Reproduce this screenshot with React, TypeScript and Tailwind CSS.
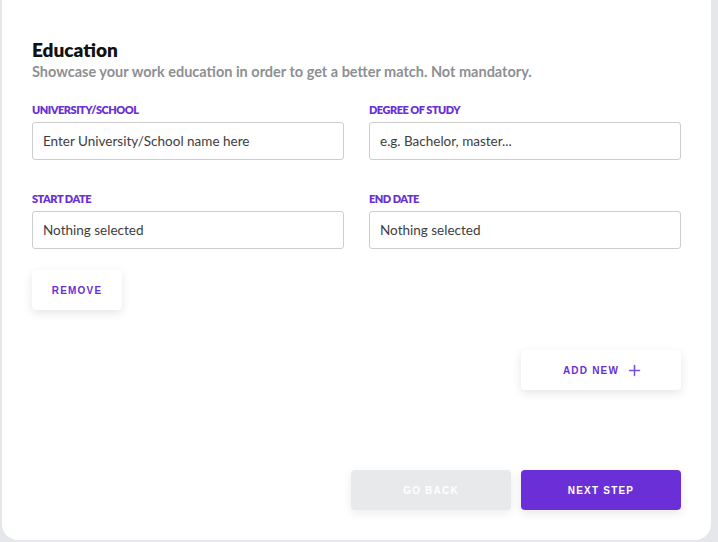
import { Plus } from 'lucide-react';

interface FieldProps {
    label: string;
    placeholder: string;
}

function Field({ label, placeholder }: FieldProps) {
    return (
        <div className="flex flex-col">
            <label className="text-[11px] leading-[16px] font-extrabold text-[#6a2fd6] uppercase tracking-[-0.5px] mb-[4px]">
                {label}
            </label>
            <div className="h-[38px] rounded-[3px] border border-[#cdcdcd] bg-white flex items-center px-[10px] text-[13.5px] text-[#3d3d3d]">
                {placeholder}
            </div>
        </div>
    );
}

export default function App() {
    return (
        <div
            className="w-[718px] h-[542px] bg-[#e6e7ea] overflow-hidden"
            style={{ fontFamily: 'Lato, "Open Sans", sans-serif' }}
        >
            <div className="ml-[2px] w-[709px] h-[540px] bg-white rounded-b-[16px] px-[30px] pt-[38px] flex flex-col">
                <h2 className="text-[19px] leading-[24px] font-extrabold text-[#111]">Education</h2>
                <p className="text-[14.5px] leading-[20px] font-bold text-[#8d8f93]">
                    Showcase your work education in order to get a better match. Not mandatory.
                </p>

                <div className="grid grid-cols-2 gap-x-[25px] mt-[20px]">
                    <Field label="University/School" placeholder="Enter University/School name here" />
                    <Field label="Degree of study" placeholder="e.g. Bachelor, master..." />
                </div>

                <div className="grid grid-cols-2 gap-x-[25px] mt-[31px]">
                    <Field label="Start date" placeholder="Nothing selected" />
                    <Field label="End date" placeholder="Nothing selected" />
                </div>

                <div className="mt-[21px]">
                    <button
                        className="w-[90px] h-[40px] rounded-[4px] bg-white shadow-[0_3px_10px_rgba(0,0,0,0.1)] text-[10px] font-bold tracking-[1.2px] text-[#6a2fd6]"
                        style={{ fontFamily: '"Liberation Sans", Arial, sans-serif' }}
                    >
                        REMOVE
                    </button>
                </div>

                <div className="mt-[40px] flex justify-end">
                    <button
                        className="w-[160px] h-[40px] rounded-[4px] bg-white shadow-[0_3px_10px_rgba(0,0,0,0.1)] text-[10px] font-bold tracking-[1.2px] text-[#6a2fd6] flex items-center justify-center gap-[7px] pl-[4px]"
                        style={{ fontFamily: '"Liberation Sans", Arial, sans-serif' }}
                    >
                        ADD NEW
                        <Plus size={17} strokeWidth={2.2} className="text-[#7b4fdc]" />
                    </button>
                </div>

                <div
                    className="mt-[80px] flex justify-end gap-[10px]"
                    style={{ fontFamily: '"Liberation Sans", Arial, sans-serif' }}
                >
                    <button className="w-[160px] h-[40px] rounded-[4px] bg-[#e8e9eb] shadow-[0_3px_10px_rgba(0,0,0,0.08)] text-[10px] font-bold tracking-[1.2px] text-white">
                        GO BACK
                    </button>
                    <button className="w-[160px] h-[40px] rounded-[4px] bg-[#6a2fd6] shadow-[0_3px_10px_rgba(0,0,0,0.1)] text-[10px] font-bold tracking-[1.2px] text-white">
                        NEXT STEP
                    </button>
                </div>
            </div>
        </div>
    );
}
